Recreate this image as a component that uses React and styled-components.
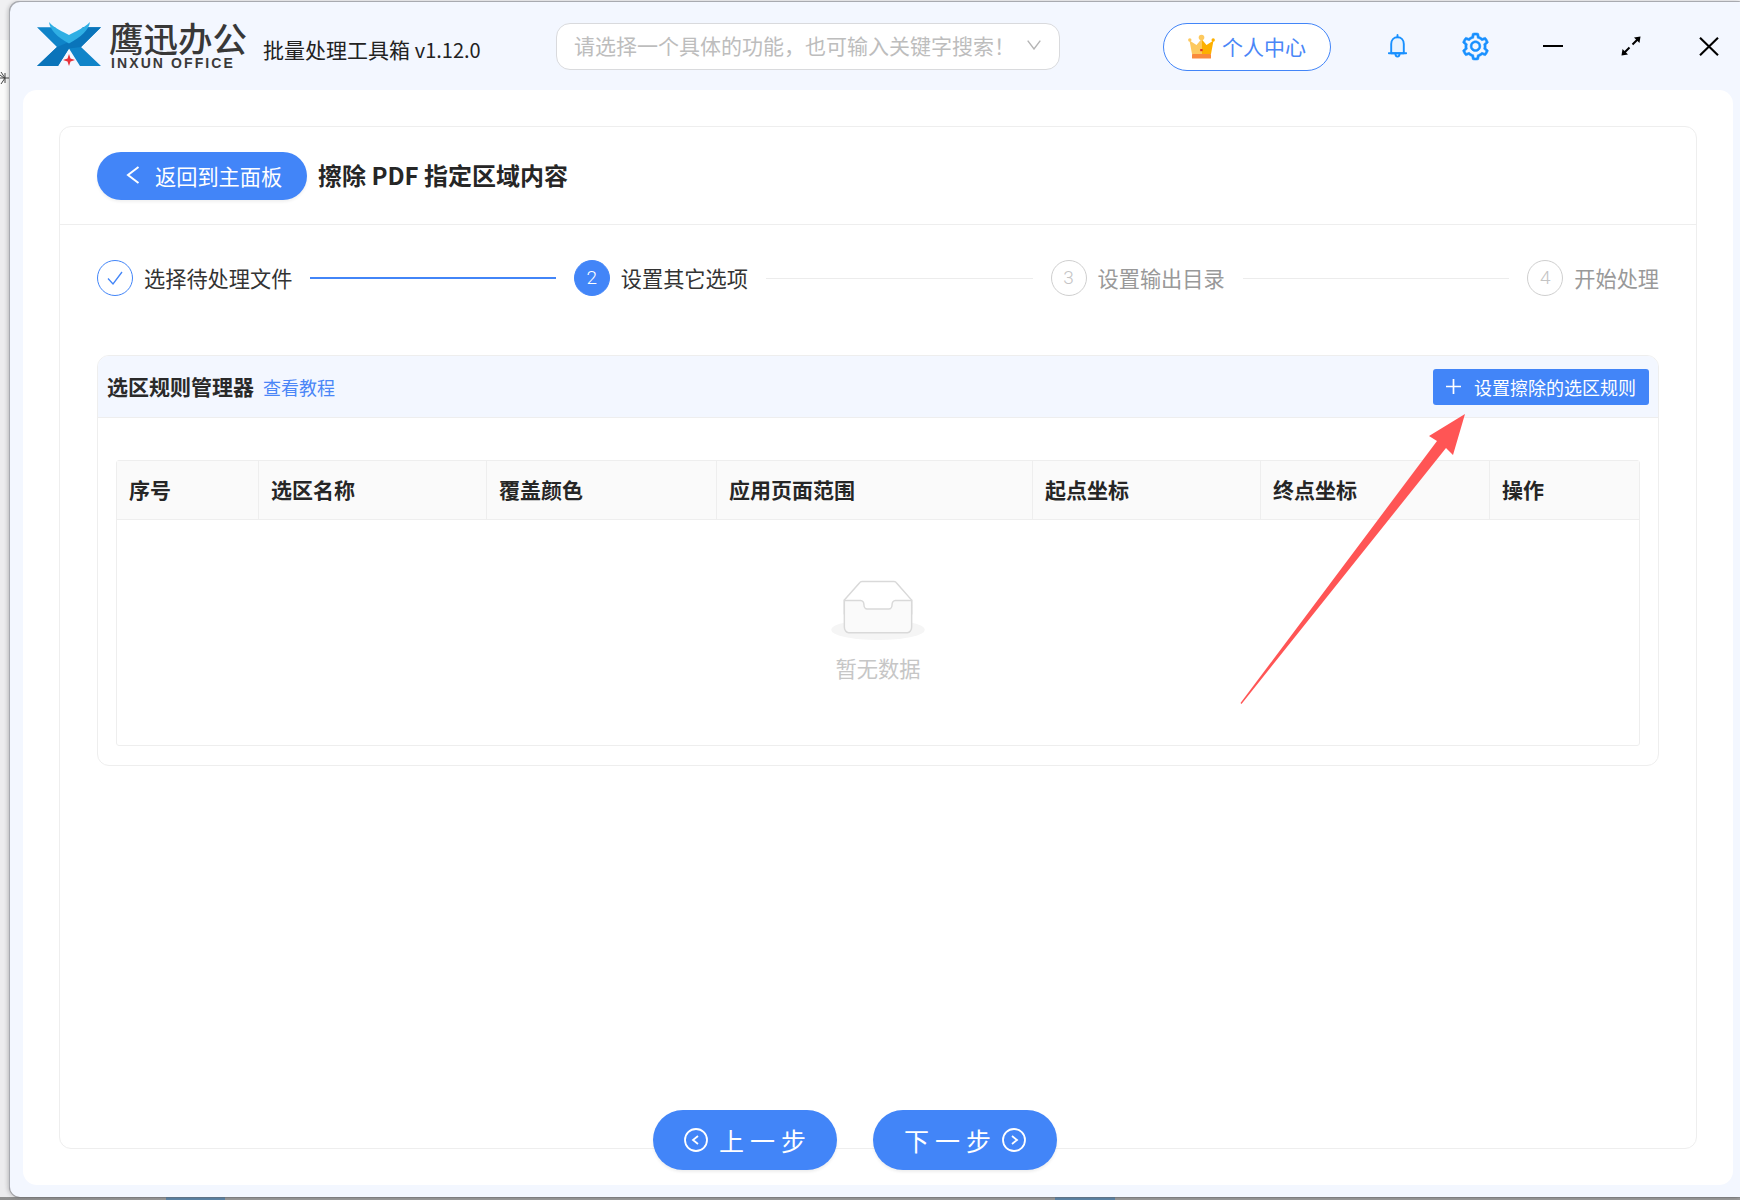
import React from 'react';
import styled, { createGlobalStyle } from 'styled-components';
import { AiOutlineSetting } from 'react-icons/ai';

const Global = createGlobalStyle`
  html, body { margin: 0; padding: 0; background: #ebebed; }
  body { font-family: "Noto Sans CJK SC", "Noto Sans", sans-serif; color: #333; }
  * { box-sizing: border-box; }
`;

const blue = '#4285f8';

const Page = styled.div`
  position: relative;
  width: 1740px;
  height: 1200px;
  overflow: hidden;
  padding: 2px 0 3px 10px;
  background:
    linear-gradient(90deg, #8f8f8f 0, #9a9a9a 166px, #5d85a8 166px, #5d85a8 225px, #9a9a9a 225px, #9a9a9a 1055px, #5d85a8 1055px, #5d85a8 1115px, #9a9a9a 1115px) 0 100% / 100% 3px no-repeat,
    linear-gradient(180deg, #f0f0f2 0, #f0f0f2 40px, #fafafa 40px, #fafafa 120px, #ececee 120px);
`;

const BackdropMark = styled.svg`
  position: absolute;
  left: 0;
  top: 70px;
`;

const Window = styled.div`
  display: flex;
  flex-direction: column;
  height: 100%;
  background: #f3f7ff;
  border-radius: 10px 0 0 10px;
  box-shadow: -1px -1px 0 #a8aab0, -2px 0 4px rgba(0, 0, 0, 0.22), 0 0 0 1px rgba(120, 120, 125, 0.45);
`;

const TitleBar = styled.header`
  display: flex;
  align-items: center;
  flex: none;
  height: 88px;
  padding-left: 27px;
`;

const Brand = styled.div`
  display: flex;
  align-items: center;
  flex: none;
  width: 226px;
  gap: 8px;
`;

const LogoMark = styled.svg`
  flex: none;
  margin-bottom: 3px;
`;

const BrandText = styled.div`
  display: flex;
  flex-direction: column;
`;

const BrandName = styled.span`
  display: block;
  height: 33px;
  font-size: 34.5px;
  line-height: 28px;
  font-weight: 500;
  color: #383838;
  white-space: nowrap;
`;

const BrandSub = styled.span`
  font-family: "Liberation Sans", sans-serif;
  font-size: 14px;
  line-height: 14px;
  margin-left: 2px;
  font-weight: 700;
  letter-spacing: 2.1px;
  color: #3a3a3a;
  white-space: nowrap;
`;

const Product = styled.div`
  flex: none;
  width: 293px;
  padding-top: 6px;
  font-size: 21px;
  color: #222;
  white-space: nowrap;
`;

const Version = styled.span`
  font-size: 20px;
`;

const Search = styled.div`
  display: flex;
  align-items: center;
  justify-content: space-between;
  flex: none;
  width: 504px;
  height: 47px;
  padding: 0 18px 2px 17px;
  background: #fff;
  border: 1px solid #d9dadd;
  border-radius: 14px;
  font-size: 21px;
  color: #bdbdbd;
  white-space: nowrap;
`;

const UserButton = styled.div`
  display: flex;
  align-items: center;
  justify-content: center;
  flex: none;
  gap: 7px;
  width: 168px;
  height: 48px;
  margin-left: 103px;
  margin-top: 1px;
  padding-bottom: 1px;
  background: #fff;
  border: 1px solid ${blue};
  border-radius: 24px;
  font-size: 21px;
  color: #4a86f7;
`;

const IconRow = styled.div`
  display: flex;
  align-items: center;
  flex: none;
  gap: 54px;
  margin-left: 54px;
`;

const IconSlot = styled.div`
  display: flex;
  align-items: center;
  justify-content: center;
  width: 24px;
  height: 24px;
  color: ${p => p.$color || '#000'};

  & > svg {
    flex: none;
  }
`;

const Card = styled.main`
  display: flex;
  flex-direction: column;
  flex: 1;
  min-height: 0;
  margin: 0 7px 12px 13px;
  padding: 36px 36px 15px;
  background: #fff;
  border-radius: 14px;
`;

const Panel = styled.section`
  display: flex;
  flex-direction: column;
  flex: 1;
  min-height: 0;
  border: 1px solid #eeeeee;
  border-radius: 12px;
`;

const PanelHead = styled.div`
  display: flex;
  align-items: center;
  flex: none;
  gap: 11px;
  height: 98px;
  padding: 0 37px;
  border-bottom: 1px solid #eeeeee;
`;

const BackButton = styled.div`
  display: flex;
  align-items: center;
  flex: none;
  gap: 15px;
  width: 210px;
  height: 48px;
  padding: 0 0 1px 29px;
  background: ${blue};
  border-radius: 24px;
  box-shadow: 0 2px 3px rgba(0, 0, 0, 0.06);
  font-size: 21.2px;
  color: #fff;
`;

const PageTitle = styled.h1`
  margin: 0;
  padding-bottom: 2px;
  font-size: 24px;
  font-weight: 700;
  color: #262626;
  white-space: nowrap;
`;

const Stepper = styled.div`
  display: flex;
  flex: none;
  padding: 35px 37px 0 37px;
`;

const Step = styled.div`
  display: flex;
  align-items: center;
  flex: ${p => (p.$last ? 'none' : '1')};
`;

const StepDot = styled.div`
  display: flex;
  align-items: center;
  justify-content: center;
  flex: none;
  width: 36px;
  height: 36px;
  padding-bottom: 1px;
  border-radius: 50%;
  font-family: Roboto, sans-serif;
  font-size: 19px;
  font-weight: 300;
  background: ${p => (p.$state === 'current' ? blue : '#fff')};
  color: ${p => (p.$state === 'current' ? '#fff' : '#c4c4c4')};
  border: 1px solid ${p => (p.$state === 'wait' ? '#cfcfcf' : blue)};
`;

const StepLabel = styled.span`
  margin-left: 11px;
  padding-bottom: 1px;
  font-size: 21.2px;
  white-space: nowrap;
  color: ${p => (p.$state === 'wait' ? '#999' : '#333')};
`;

const StepLine = styled.div`
  flex: 1;
  height: ${p => (p.$done ? '1.5px' : '1px')};
  margin: 0 18px;
  background: ${p => (p.$done ? blue : '#ececec')};
`;

const RuleBox = styled.div`
  flex: none;
  margin: 59px 37px 0 37px;
  height: 411px;
  border: 1px solid #eeeeee;
  border-radius: 12px;
  overflow: hidden;
`;

const RuleHead = styled.div`
  display: flex;
  align-items: center;
  height: 62px;
  padding: 0 9px;
  background: #f3f7ff;
  border-bottom: 1px solid #eeeeee;
`;

const RuleTitle = styled.span`
  padding-bottom: 1px;
  font-size: 21px;
  font-weight: 700;
  color: #2a2a2a;
`;

const TutorialLink = styled.a`
  margin-left: 9px;
  font-size: 18px;
  color: #4a86f7;
`;

const AddButton = styled.div`
  display: flex;
  align-items: center;
  gap: 13px;
  height: 36px;
  margin-left: auto;
  padding: 0 13px;
  background: ${blue};
  border-radius: 3px;
  font-size: 18px;
  color: #fff;
  white-space: nowrap;
`;

const TableWrap = styled.div`
  margin: 42px 18px 20px 18px;
  height: 286px;
  border: 1px solid #eeeeee;
  border-radius: 3px;
`;

const TableHead = styled.div`
  display: grid;
  grid-template-columns: 141px 228px 230px 316px 228px 229px 1fr;
  height: 59px;
  background: #fafafa;
  border-bottom: 1px solid #eeeeee;
`;

const HeadCell = styled.div`
  display: flex;
  align-items: center;
  padding: 0 0 2px 12px;
  font-size: 21px;
  font-weight: 700;
  color: #262626;
  border-left: ${p => (p.$first ? 'none' : '1px solid #eeeeee')};
`;

const Empty = styled.div`
  display: flex;
  flex-direction: column;
  align-items: center;
  padding-top: 60px;
`;

const EmptyText = styled.span`
  margin-top: 12px;
  font-size: 21.3px;
  color: #c6c6c6;
`;

const Footer = styled.div`
  position: relative;
  display: flex;
  justify-content: center;
  flex: none;
  gap: 36px;
  margin-top: -39px;
  padding-right: 46px;
`;

const StepButton = styled.div`
  display: flex;
  align-items: center;
  justify-content: center;
  gap: 11px;
  width: 184px;
  height: 60px;
  background: ${blue};
  border-radius: 30px;
  box-shadow: 0 2px 3px rgba(0, 0, 0, 0.07);
  font-size: 25px;
  letter-spacing: 6px;
  color: #fff;
`;

const StepButtonText = styled.span`
  margin-right: -6px;
`;

const ArrowOverlay = styled.svg`
  position: absolute;
  left: 1240px;
  top: 414px;
`;

const columns = ['序号', '选区名称', '覆盖颜色', '应用页面范围', '起点坐标', '终点坐标', '操作'];

const Logo = () => (
  <LogoMark width="64" height="45" viewBox="0 0 64 45">
    <polygon points="0,5.3 18,5.3 32,20 46,5.3 64,5.3 44,25 64,44 43,44 32,26.5 21,44 0,44 20,25" fill="#0f84c9" />
    <polygon points="32,20 46,5.3 64,5.3 44,25 32,26.5 21,44 0,44 20,25" fill="#0a74ba" />
    <path d="M12 0 C18 7 26 9.5 32 13 C38 9.5 46 7 53 0 C52 8 44 15 32 21.5 C20 15 13 8 12 0 Z" fill="#2fafe4" />
    <path d="M32 32 L33.5 36.5 L38 38 L33.5 39.5 L32 44 L30.5 39.5 L26 38 L30.5 36.5 Z" fill="#e8303a" />
  </LogoMark>
);

const Chevron = () => (
  <svg width="14" height="10" viewBox="0 0 14 10">
    <polyline points="0.7,0.7 7,9 13.3,0.7" fill="none" stroke="#b5b5b5" strokeWidth="1.4" />
  </svg>
);

const Crown = () => (
  <svg width="27" height="25" viewBox="0 0 27 25">
    <path d="M13.5 5 L8.5 11 L1.5 6.5 L4 20 H13.5 Z" fill="#fdc95e" />
    <path d="M13.5 5 L18.5 11 L25.5 6.5 L23 20 H13.5 Z" fill="#fdb000" />
    <rect x="4" y="20" width="19" height="4.5" rx="0.5" fill="#f98a3c" />
    <circle cx="13.5" cy="3.5" r="2.8" fill="#fdc95e" />
    <circle cx="1.8" cy="6" r="1.7" fill="#fdc95e" />
    <circle cx="25.2" cy="6" r="1.7" fill="#fdb000" />
    <rect x="12.2" y="15" width="2.4" height="2.2" fill="#d9342b" />
  </svg>
);

const Bell = () => (
  <svg width="19" height="24" viewBox="0 0 19 24" fill="none" stroke="currentColor" strokeWidth="1.9" strokeLinejoin="round">
    <path d="M3.2 19.2 V10 C3.2 6 5.8 3.2 9.5 3.2 C13.2 3.2 15.8 6 15.8 10 V19.2 Z" fill="#e8f3ff" />
    <path d="M0.8 19.2 H18.2" strokeLinecap="round" />
    <path d="M9.5 1 V3" strokeLinecap="round" />
    <path d="M7.4 19.6 C7.4 21.8 8.4 22.6 9.5 22.6 C10.6 22.6 11.6 21.8 11.6 19.6" />
  </svg>
);

const Minimize = () => (
  <svg width="20" height="4" viewBox="0 0 20 4">
    <rect x="0" y="1" width="20" height="2" fill="#000" />
  </svg>
);

const Expand = () => (
  <svg width="20" height="20" viewBox="0 0 20 20">
    <path d="M3.5 16.5 L8.5 11.5 M11.5 8.5 L16.5 3.5" stroke="#000" strokeWidth="2" />
    <polygon points="19.5,0.5 18.5,7 13,1.5" fill="#000" />
    <polygon points="0.5,19.5 1.5,13 7,18.5" fill="#000" />
  </svg>
);

const Close = () => (
  <svg width="20" height="19" viewBox="0 0 20 19">
    <path d="M1 0.8 L19 18.2 M19 0.8 L1 18.2" stroke="#000" strokeWidth="2.1" />
  </svg>
);

const LeftChevron = () => (
  <svg width="14" height="18" viewBox="0 0 14 18">
    <polyline points="12.5,1 2,9 12.5,17" fill="none" stroke="#fff" strokeWidth="2" />
  </svg>
);

const Check = () => (
  <svg width="16" height="14" viewBox="0 0 16 14">
    <polyline points="1,7.5 6,13 15,1" fill="none" stroke={blue} strokeWidth="1.3" />
  </svg>
);

const Plus = () => (
  <svg width="15" height="15" viewBox="0 0 15 15">
    <path d="M7.5 0 V15 M0 7.5 H15" stroke="#fff" strokeWidth="1.7" />
  </svg>
);

const CircleArrow = ({ dir }) => (
  <svg width="24" height="24" viewBox="0 0 24 24" fill="none" stroke="#fff" strokeWidth="1.8">
    <circle cx="12" cy="12" r="11" />
    <polyline points={dir === 'left' ? '14,8 9,12 14,16' : '10,8 15,12 10,16'} />
  </svg>
);

const EmptyIcon = () => (
  <svg width="94" height="60" viewBox="0 0 64 41">
    <g transform="translate(0 1)" fill="none" fillRule="evenodd">
      <ellipse fill="#f5f5f5" cx="32" cy="33" rx="32" ry="7" />
      <g fillRule="nonzero" stroke="#d9d9d9">
        <path d="M55 12.76L44.854 1.258C44.367.474 43.656 0 42.907 0H21.093c-.749 0-1.46.474-1.947 1.257L9 12.761V22h46v-9.24z" />
        <path d="M41.613 15.931c0-1.605.994-2.93 2.227-2.931H55v18.137C55 33.26 53.68 35 52.05 35h-40.1C10.32 35 9 33.259 9 31.137V13h11.16c1.233 0 2.227 1.323 2.227 2.928v.022c0 1.605 1.005 2.901 2.237 2.901h14.752c1.232 0 2.237-1.308 2.237-2.913v-.007z" fill="#fafafa" />
      </g>
    </g>
  </svg>
);

export default function App() {
  return (
    <>
      <Global />
      <Page>
        <BackdropMark width="9" height="16" viewBox="0 0 9 16">
          <path d="M0 8 H9 M1 2 L5 8 L1 14 M5 3 V13 M0 5 L4 8" stroke="#444" strokeWidth="1" fill="none" />
        </BackdropMark>
        <Window>
          <TitleBar>
            <Brand>
              <Logo />
              <BrandText>
                <BrandName>鹰迅办公</BrandName>
                <BrandSub>INXUN OFFICE</BrandSub>
              </BrandText>
            </Brand>
            <Product>批量处理工具箱 <Version>v1.12.0</Version></Product>
            <Search>
              <span>请选择一个具体的功能，也可输入关键字搜索！</span>
              <Chevron />
            </Search>
            <UserButton>
              <Crown />
              <span>个人中心</span>
            </UserButton>
            <IconRow>
              <IconSlot $color="#1890ff"><Bell /></IconSlot>
              <IconSlot $color="#1890ff"><AiOutlineSetting size={31} stroke="currentColor" strokeWidth={18} /></IconSlot>
              <IconSlot><Minimize /></IconSlot>
              <IconSlot><Expand /></IconSlot>
              <IconSlot><Close /></IconSlot>
            </IconRow>
          </TitleBar>
          <Card>
            <Panel>
              <PanelHead>
                <BackButton>
                  <LeftChevron />
                  <span>返回到主面板</span>
                </BackButton>
                <PageTitle>擦除 PDF 指定区域内容</PageTitle>
              </PanelHead>
              <Stepper>
                <Step>
                  <StepDot $state="done"><Check /></StepDot>
                  <StepLabel $state="done">选择待处理文件</StepLabel>
                  <StepLine $done />
                </Step>
                <Step>
                  <StepDot $state="current">2</StepDot>
                  <StepLabel $state="current">设置其它选项</StepLabel>
                  <StepLine />
                </Step>
                <Step>
                  <StepDot $state="wait">3</StepDot>
                  <StepLabel $state="wait">设置输出目录</StepLabel>
                  <StepLine />
                </Step>
                <Step $last>
                  <StepDot $state="wait">4</StepDot>
                  <StepLabel $state="wait">开始处理</StepLabel>
                </Step>
              </Stepper>
              <RuleBox>
                <RuleHead>
                  <RuleTitle>选区规则管理器</RuleTitle>
                  <TutorialLink>查看教程</TutorialLink>
                  <AddButton>
                    <Plus />
                    <span>设置擦除的选区规则</span>
                  </AddButton>
                </RuleHead>
                <TableWrap>
                  <TableHead>
                    {columns.map((c, i) => (
                      <HeadCell key={c} $first={i === 0}>{c}</HeadCell>
                    ))}
                  </TableHead>
                  <Empty>
                    <EmptyIcon />
                    <EmptyText>暂无数据</EmptyText>
                  </Empty>
                </TableWrap>
              </RuleBox>
            </Panel>
            <Footer>
              <StepButton>
                <CircleArrow dir="left" />
                <StepButtonText>上一步</StepButtonText>
              </StepButton>
              <StepButton>
                <StepButtonText>下一步</StepButtonText>
                <CircleArrow dir="right" />
              </StepButton>
            </Footer>
          </Card>
        </Window>
        <ArrowOverlay width="226" height="291" viewBox="0 0 226 291">
          <polygon points="225,0 189,22 197,27 0.5,289 1.5,290 206,34 213,41" fill="#ff5555" />
        </ArrowOverlay>
      </Page>
    </>
  );
}
